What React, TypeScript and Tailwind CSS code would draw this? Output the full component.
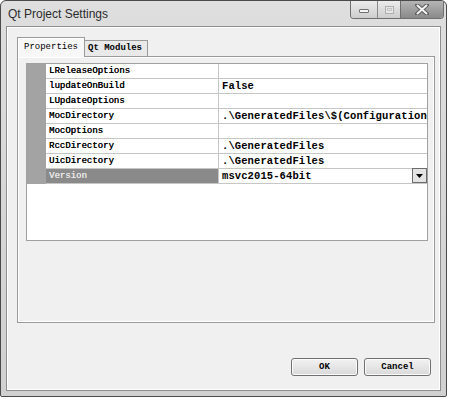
import React from "react";

type Prop = { name: string; value: string; selected?: boolean; combo?: boolean };

const PROPS: Prop[] = [
  { name: "LReleaseOptions", value: "" },
  { name: "lupdateOnBuild", value: "False" },
  { name: "LUpdateOptions", value: "" },
  { name: "MocDirectory", value: ".\\GeneratedFiles\\$(ConfigurationName)" },
  { name: "MocOptions", value: "" },
  { name: "RccDirectory", value: ".\\GeneratedFiles" },
  { name: "UicDirectory", value: ".\\GeneratedFiles" },
  { name: "Version", value: "msvc2015-64bit", selected: true, combo: true },
];

const mono = "font-['Liberation_Mono',monospace]";

function CaptionButtons() {
  return (
    <div className="flex h-[18px] mr-[2px] rounded-b-[4px] border border-t-0 border-[#6f6f6f] overflow-hidden">
      <div className="w-[27px] flex items-center justify-center bg-gradient-to-b from-[#ececec] to-[#cdcdcd] border-r border-[#8a8a8a]">
        <div className="w-[10px] h-[4px] rounded-[1px] border border-[#707070] bg-[#f4f4f4] mt-[3px]" />
      </div>
      <div className="w-[23px] flex items-center justify-center bg-gradient-to-b from-[#ececec] to-[#cdcdcd] border-r border-[#6f6f6f]">
        <div className="w-[9px] h-[8px] border border-[#b0b0b0] bg-[#e6e6e6] flex items-center justify-center">
          <div className="w-[5px] h-[3px] border border-[#c4c4c4]" />
        </div>
      </div>
      <div className="w-[42px] flex items-center justify-center bg-gradient-to-b from-[#b4b4b4] to-[#8a8a8a]">
        <svg width="14" height="11" viewBox="0 0 14 11">
          <path d="M2 1 L12 10 M12 1 L2 10" stroke="#5c5c5c" strokeWidth="4" strokeLinecap="round" />
          <path d="M2.5 1.5 L11.5 9.5 M11.5 1.5 L2.5 9.5" stroke="#f4f4f4" strokeWidth="2" strokeLinecap="round" />
        </svg>
      </div>
    </div>
  );
}

function PropRow({ p }: { p: Prop }) {
  return (
    <div className="flex h-[15px]">
      <div className="w-[19px] bg-[#a3a3a3]" />
      <div
        className={`w-[173px] pl-[3px] border-b border-r border-[#c6c6c6] text-[9px] leading-[14px] whitespace-nowrap ${mono} ${
          p.selected
            ? "bg-[#8a8a8a] text-[#e6e6e6] [text-shadow:0.3px_0_0_#e6e6e6]"
            : "bg-white text-black [text-shadow:0.3px_0_0_#000]"
        }`}
      >
        {p.name}
      </div>
      <div className="flex-1 min-w-0 flex border-b border-[#c6c6c6] bg-white">
        <div className={`flex-1 min-w-0 pl-[3px] overflow-hidden whitespace-nowrap text-[10.5px] tracking-[0.1px] leading-[14px] font-bold text-black ${mono}`}>
          {p.value}
        </div>
        {p.combo && (
          <div className="w-[15px] h-[15px] -mt-px border border-[#6c6c6c] bg-[#e4e4e4] flex items-center justify-center">
            <svg width="7" height="4" viewBox="0 0 7 4">
              <path d="M0 0 H7 L3.5 4 Z" fill="#000" />
            </svg>
          </div>
        )}
      </div>
    </div>
  );
}

export default function App() {
  return (
    <div className="w-[450px] h-[400px] bg-white">
      <div className="w-[447px] h-[397px] flex flex-col border border-[#4a4a4a] rounded-t-[6px] rounded-b-[2px] bg-gradient-to-b from-[#dedede] to-[#d0d0d0]">
        {/* title bar */}
        <div className="h-[25px] flex justify-between items-start">
          <div className="pl-[7px] pt-[5px] text-[12px] leading-[16px] text-[#2b2b2b] font-['Liberation_Sans',sans-serif]">
            Qt Project Settings
          </div>
          <CaptionButtons />
        </div>

        {/* client area */}
        <div className="flex-1 mx-[5px] mb-[5px] border border-[#8e8e8e] bg-[#f0f0f0] flex flex-col">
          <div className="flex-1 border border-white flex flex-col">
            {/* tabs */}
            <div className="ml-[9px] mt-[9px] h-[19px] flex items-end">
              <div className={`relative z-10 -mb-px w-[68px] h-[20px] border border-b-0 border-[#9a9a9a] bg-[#f7f7f7] shadow-[inset_1px_1px_0_#ffffff] pl-[6px] pt-[2px] text-[9px] leading-[14px] text-black ${mono}`}>
                Properties
              </div>
              <div className={`w-[63px] h-[16px] border border-l-0 border-b-0 border-[#9a9a9a] bg-[#e9e9e9] pl-[3px] text-[9px] leading-[14px] font-bold text-black ${mono}`}>
                Qt Modules
              </div>
            </div>

            {/* tab panel */}
            <div className="ml-[9px] w-[418px] h-[267px] border border-[#9a9a9a] bg-[#f0f0f0]">
              <div className="h-full border border-white">
                <div className="ml-[7px] mt-[5px] w-[402px] h-[178px] border border-[#a0a0a0] bg-white">
                  {PROPS.map((p) => (
                    <PropRow key={p.name} p={p} />
                  ))}
                </div>
              </div>
            </div>

            {/* dialog buttons */}
            <div className="mt-[35px] pr-[8px] flex justify-end gap-[6px]">
              {["OK", "Cancel"].map((t) => (
                <button
                  key={t}
                  className={`w-[67px] h-[18px] rounded-[3px] border border-[#707070] bg-gradient-to-b from-[#f2f2f2] to-[#d9d9d9] shadow-[inset_0_0_0_1px_#fbfbfb] text-[9px] leading-[14px] font-bold text-black ${mono}`}
                >
                  {t}
                </button>
              ))}
            </div>
          </div>
        </div>
      </div>
    </div>
  );
}
